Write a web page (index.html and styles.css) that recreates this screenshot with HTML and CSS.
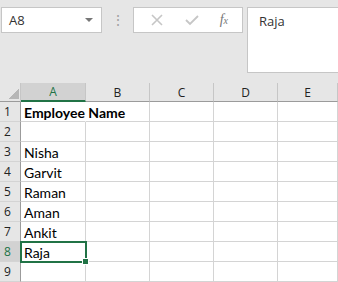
FILE: index.html
```html
<!DOCTYPE html>
<html lang="en">
<head>
    <meta charset="utf-8" />
    <title>Sheet</title>
    <link rel="stylesheet" href="styles.css">
</head>
<body>
    <div class="bar">
        <div class="namebox">
            <span>A8</span>
            <span class="caret"></span>
        </div>
        <div class="dots">&#8942;</div>
        <div class="buttons">
            <svg width="14" height="14" viewBox="0 0 14 14"><path d="M2 2 L12 12 M12 2 L2 12" stroke="#c6c6c6" stroke-width="1.6" fill="none"/></svg>
            <svg width="16" height="14" viewBox="0 0 16 14"><path d="M2 7 L6 11 L14 3" stroke="#c6c6c6" stroke-width="1.8" fill="none"/></svg>
            <span class="fx"><i>f</i><small>x</small></span>
        </div>
        <div class="formula">Raja</div>
    </div>

    <div class="sheet">
        <div class="corner"></div>
        <div class="colhead active">A</div>
        <div class="colhead">B</div>
        <div class="colhead">C</div>
        <div class="colhead">D</div>
        <div class="colhead">E</div>

        <div class="rowhead">1</div><div class="cell bold">Employee Name</div><div class="cell"></div><div class="cell"></div><div class="cell"></div><div class="cell"></div>
        <div class="rowhead">2</div><div class="cell"></div><div class="cell"></div><div class="cell"></div><div class="cell"></div><div class="cell"></div>
        <div class="rowhead">3</div><div class="cell">Nisha</div><div class="cell"></div><div class="cell"></div><div class="cell"></div><div class="cell"></div>
        <div class="rowhead">4</div><div class="cell">Garvit</div><div class="cell"></div><div class="cell"></div><div class="cell"></div><div class="cell"></div>
        <div class="rowhead">5</div><div class="cell">Raman</div><div class="cell"></div><div class="cell"></div><div class="cell"></div><div class="cell"></div>
        <div class="rowhead">6</div><div class="cell">Aman</div><div class="cell"></div><div class="cell"></div><div class="cell"></div><div class="cell"></div>
        <div class="rowhead">7</div><div class="cell">Ankit</div><div class="cell"></div><div class="cell"></div><div class="cell"></div><div class="cell"></div>
        <div class="rowhead active">8</div><div class="cell selected">Raja<span class="handle"></span></div><div class="cell"></div><div class="cell"></div><div class="cell"></div><div class="cell"></div>
        <div class="rowhead">9</div><div class="cell"></div><div class="cell"></div><div class="cell"></div><div class="cell"></div><div class="cell"></div>
    </div>
</body>
</html>
```

FILE: styles.css
```css
body {
    background-color: #e6e6e6;
    margin: 0px;
    padding: 0px;
    font-family: "Open Sans", sans-serif;
    overflow: hidden;
}

.bar {
    display: flex;
    align-items: flex-start;
    height: 83px;
    padding-top: 7px;
    box-sizing: border-box;
}

.namebox {
    width: 101px;
    height: 26px;
    margin-left: 1px;
    background-color: #fff;
    border: 1px solid #c6c6c6;
    box-sizing: border-box;
    display: flex;
    align-items: center;
    justify-content: space-between;
    padding: 0px 8px 0px 7px;
    font-size: 13px;
    color: #333;
}

.caret {
    width: 0px;
    height: 0px;
    border-left: 4px solid transparent;
    border-right: 4px solid transparent;
    border-top: 4px solid #777;
}

.dots {
    width: 31px;
    text-align: center;
    color: #a0a0a0;
    font-size: 14px;
    line-height: 26px;
}

.buttons {
    width: 110px;
    height: 26px;
    background-color: #fff;
    border: 1px solid #c6c6c6;
    box-sizing: border-box;
    display: flex;
    align-items: center;
    justify-content: space-around;
    padding: 0px 4px 0px 6px;
}

.fx {
    font-family: "Liberation Serif", serif;
    color: #777;
    font-size: 14px;
}

.fx small {
    font-size: 10px;
    font-style: italic;
}

.formula {
    flex: 1;
    margin-left: 4px;
    height: 66px;
    background-color: #fff;
    border: 1px solid #c6c6c6;
    border-right: none;
    box-sizing: border-box;
    padding: 4px 11px;
    font-size: 13px;
    color: #333;
}

.sheet {
    display: grid;
    grid-template-columns: 21px 65px 64px 64px 64px 1fr;
    grid-template-rows: 19px repeat(9, 20px);
}

.corner {
    background: linear-gradient(135deg, transparent 58%, #b6b6b6 58%) no-repeat 7px 4px / 12px 12px;
    border-bottom: 1px solid #9b9b9b;
    border-right: 1px solid #c6c6c6;
}

.colhead {
    border-bottom: 1px solid #9b9b9b;
    border-right: 1px solid #c6c6c6;
    text-align: center;
    font-size: 12px;
    line-height: 19px;
    color: #222;
}

.colhead.active {
    background-color: #d2d2d2;
    border-bottom: 2px solid #217346;
    color: #217346;
    line-height: 18px;
}

.rowhead {
    border-right: 1px solid #9b9b9b;
    border-bottom: 1px solid #d4d4d4;
    font-size: 12px;
    line-height: 20px;
    padding-left: 4px;
    color: #222;
}

.rowhead.active {
    background-color: #d2d2d2;
    color: #217346;
}

.cell {
    position: relative;
    background-color: #fff;
    border-right: 1px solid #d4d4d4;
    border-bottom: 1px solid #d4d4d4;
    font-family: "Lato", sans-serif;
    font-size: 14px;
    line-height: 21px;
    padding-left: 3px;
    white-space: nowrap;
    color: #000;
}

.bold {
    font-weight: bold;
    border-right-color: #fff;
    overflow: visible;
    z-index: 1;
}

.selected {
    outline: 2px solid #217346;
    outline-offset: -1px;
    z-index: 2;
}

.handle {
    position: absolute;
    right: -4px;
    bottom: -4px;
    width: 5px;
    height: 5px;
    background-color: #217346;
    border: 1px solid #fff;
}
```
